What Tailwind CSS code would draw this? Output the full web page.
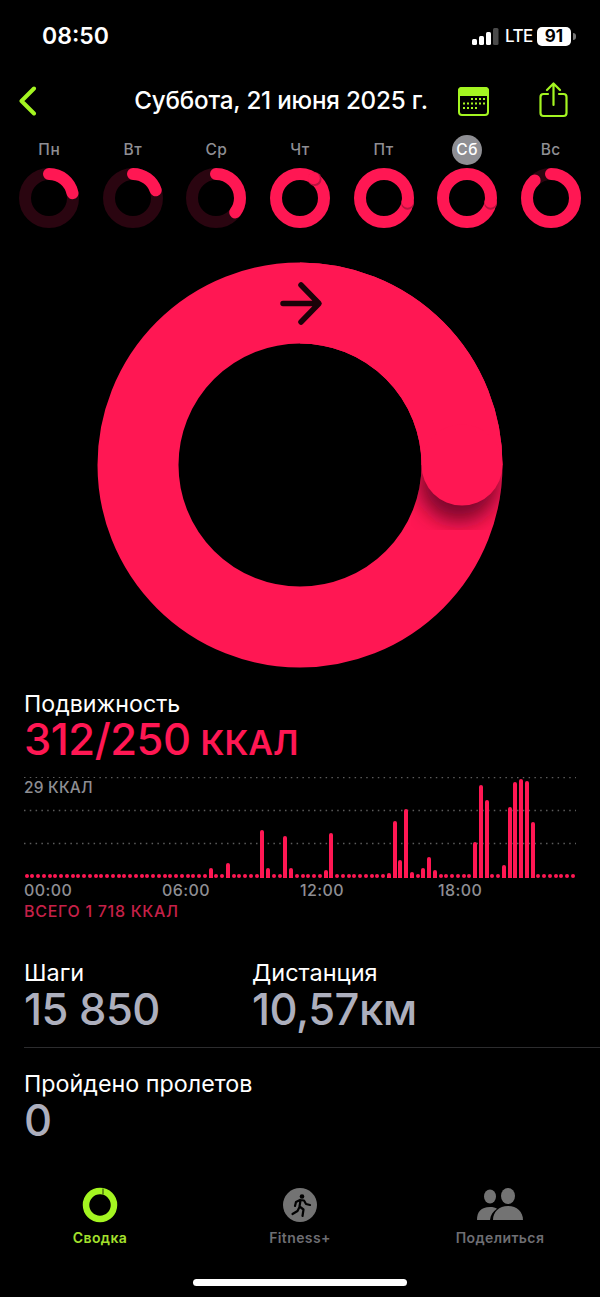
<!DOCTYPE html>
<html lang="ru">
<head>
<meta charset="utf-8">
<script src="https://cdn.jsdelivr.net/npm/@tailwindcss/browser@4"></script>
</head>
<body class="bg-black">
<div class="w-[600px] h-[1297px] overflow-hidden bg-black text-white font-['Inter','Noto_Sans',sans-serif] flex flex-col">

  <!-- status bar -->
  <div class="h-[72px] shrink-0 pl-[42px] pr-[24px] flex items-center justify-between">
    <span class="text-[23px] font-semibold leading-none">08:50</span>
    <div class="flex items-center gap-[6px]">
      <svg width="27" height="17" viewBox="0 0 27 17">
        <rect x="0" y="11" width="5" height="6" rx="1.5" fill="#fff"/>
        <rect x="7" y="8" width="5" height="9" rx="1.5" fill="#fff"/>
        <rect x="14" y="4" width="5" height="13" rx="1.5" fill="#fff"/>
        <rect x="21" y="0" width="5.5" height="17" rx="1.5" fill="#4a4a4a"/>
      </svg>
      <span class="text-[17px] font-medium leading-none w-[25px] tracking-[-0.5px]">LTE</span>
      <div class="flex items-center gap-[2px] ml-[1px]">
        <div class="w-[34px] h-[19px] rounded-[5px] bg-white text-black text-[17px] font-bold leading-none flex items-center justify-center">91</div>
        <div class="w-[3px] h-[7px] rounded-r-full bg-[#777]"></div>
      </div>
    </div>
  </div>

  <!-- nav -->
  <div class="h-[58px] shrink-0 relative flex items-center justify-center pr-[38px]">
    <svg class="absolute left-[18px] top-[14px]" width="19" height="30" viewBox="0 0 19 30" fill="none">
      <path d="M16 2.5 3.5 15 16 27.5" stroke="#a4f521" stroke-width="4" stroke-linecap="round" stroke-linejoin="round"/>
    </svg>
    <span class="text-[24.2px] font-medium leading-none tracking-[-0.2px]">Суббота, 21 июня 2025 г.</span>
    <svg class="absolute left-[458px] top-[15px]" width="31" height="29" viewBox="0 0 31 29" fill="none">
      <rect x="1" y="1" width="29" height="27" rx="3" stroke="#a4f521" stroke-width="2"/>
      <path d="M1 8V4a3 3 0 0 1 3-3h23a3 3 0 0 1 3 3v4Z" fill="#a4f521" stroke="#a4f521" stroke-width="2"/>
      <g fill="#a4f521">
        <rect x="13" y="11" width="2" height="2"/><rect x="17" y="11" width="2" height="2"/><rect x="21" y="11" width="2" height="2"/><rect x="25" y="11" width="2" height="2"/>
        <rect x="5" y="15.5" width="2" height="2"/><rect x="9" y="15.5" width="2" height="2"/><rect x="13" y="15.5" width="2" height="2"/><rect x="17" y="15.5" width="2" height="2"/><rect x="21" y="15.5" width="2" height="2"/><rect x="25" y="15.5" width="2" height="2"/>
        <rect x="5" y="20" width="2" height="2"/><rect x="9" y="20" width="2" height="2"/><rect x="13" y="20" width="2" height="2"/><rect x="17" y="20" width="2" height="2"/>
      </g>
    </svg>
    <svg class="absolute left-[539px] top-[10px]" width="29" height="36" viewBox="0 0 29 36" fill="none" stroke="#a4f521" stroke-width="2.2" stroke-linecap="round" stroke-linejoin="round">
      <path d="M9 12H4.5a3 3 0 0 0-3 3v16a3 3 0 0 0 3 3h20a3 3 0 0 0 3-3V15a3 3 0 0 0-3-3H20"/>
      <path d="M14.5 23V2M8 8l6.5-6.500L21 8"/>
    </svg>
  </div>

  <!-- week -->
  <div class="shrink-0 grid grid-cols-7 px-[7.5px] text-[15.5px] text-[#8e8e93] font-medium">
    <div class="flex flex-col items-center">
      <div class="h-[38px] pt-[2px] flex items-center"><span class="h-[28px] flex items-center tracking-[0.5px]">Пн</span></div>
      <svg width="60" height="60" viewBox="0 0 60 60" fill="none" stroke-width="12"><circle cx="30" cy="30" r="24" stroke="#2a0510"/><circle cx="30" cy="30" r="24" stroke="#ff1753" stroke-linecap="round" pathLength="360" stroke-dasharray="78 360" transform="rotate(-90 30 30)"/></svg>
    </div>
    <div class="flex flex-col items-center">
      <div class="h-[38px] pt-[2px] flex items-center"><span class="h-[28px] flex items-center tracking-[0.5px]">Вт</span></div>
      <svg width="60" height="60" viewBox="0 0 60 60" fill="none" stroke-width="12"><circle cx="30" cy="30" r="24" stroke="#2a0510"/><circle cx="30" cy="30" r="24" stroke="#ff1753" stroke-linecap="round" pathLength="360" stroke-dasharray="71 360" transform="rotate(-90 30 30)"/></svg>
    </div>
    <div class="flex flex-col items-center">
      <div class="h-[38px] pt-[2px] flex items-center"><span class="h-[28px] flex items-center tracking-[0.5px]">Ср</span></div>
      <svg width="60" height="60" viewBox="0 0 60 60" fill="none" stroke-width="12"><circle cx="30" cy="30" r="24" stroke="#2a0510"/><circle cx="30" cy="30" r="24" stroke="#ff1753" stroke-linecap="round" pathLength="360" stroke-dasharray="127 360" transform="rotate(-90 30 30)"/></svg>
    </div>
    <div class="flex flex-col items-center">
      <div class="h-[38px] pt-[2px] flex items-center"><span class="h-[28px] flex items-center tracking-[0.5px]">Чт</span></div>
      <svg width="60" height="60" viewBox="0 0 60 60" fill="none" stroke-width="12"><circle cx="30" cy="30" r="24" stroke="#ff1753"/><circle cx="44.800" cy="11.100" r="6.800" fill="#b8143f"/><circle cx="43.800" cy="10.300" r="6" fill="#ff1753"/></svg>
    </div>
    <div class="flex flex-col items-center">
      <div class="h-[38px] pt-[2px] flex items-center"><span class="h-[28px] flex items-center tracking-[0.5px]">Пт</span></div>
      <svg width="60" height="60" viewBox="0 0 60 60" fill="none" stroke-width="12"><circle cx="30" cy="30" r="24" stroke="#ff1753"/><circle cx="53.600" cy="35.300" r="6.400" fill="#b8143f"/><circle cx="53.600" cy="33.800" r="6" fill="#ff1753"/></svg>
    </div>
    <div class="flex flex-col items-center">
      <div class="h-[38px] pt-[2px] flex items-center"><span class="w-[30px] h-[30px] rounded-full bg-[#8e8e93] text-white flex items-center justify-center tracking-[0.5px]">Сб</span></div>
      <svg width="60" height="60" viewBox="0 0 60 60" fill="none" stroke-width="12"><circle cx="30" cy="30" r="24" stroke="#ff1753"/><circle cx="53.600" cy="35.300" r="6.400" fill="#b8143f"/><circle cx="53.600" cy="33.800" r="6" fill="#ff1753"/></svg>
    </div>
    <div class="flex flex-col items-center">
      <div class="h-[38px] pt-[2px] flex items-center"><span class="h-[28px] flex items-center tracking-[0.5px]">Вс</span></div>
      <svg width="60" height="60" viewBox="0 0 60 60" fill="none" stroke-width="12"><circle cx="30" cy="30" r="24" stroke="#2a0510"/><circle cx="30" cy="30" r="24" stroke="#ff1753" stroke-linecap="round" pathLength="360" stroke-dasharray="317 360" transform="rotate(-90 30 30)"/></svg>
    </div>
  </div>

  <!-- big ring -->
  <div class="shrink-0 mt-[33px] flex justify-center">
    <svg width="408" height="408" viewBox="0 0 408 408" fill="none">
      <defs>
        <mask id="ringMask"><circle cx="204" cy="204" r="162" fill="none" stroke="#fff" stroke-width="81"/></mask>
        <filter id="capBlur" x="-60%" y="-60%" width="220%" height="220%"><feGaussianBlur stdDeviation="10"/></filter>
      </defs>
      <circle cx="204" cy="204" r="162" stroke="#ff1753" stroke-width="81"/>
      <g mask="url(#ringMask)">
        <circle cx="363" cy="221" r="40" fill="#4a0619" fill-opacity="0.72" filter="url(#capBlur)"/>
      </g>
      <path d="M204 42a162 162 0 0 1 162 162" stroke="#ff1753" stroke-width="81"/>
      <circle cx="366" cy="204" r="40.500" fill="#ff1753"/>
      <path d="M187 42.500h35M205 24l18 18.500-18 18.500" stroke="#1a0208" stroke-width="5.500" stroke-linecap="round" stroke-linejoin="round"/>
    </svg>
  </div>

  <!-- move -->
  <div class="shrink-0 mt-[20px] px-[24px]">
    <div class="text-[23.2px] leading-[30px] text-white">Подвижность</div>
    <div class="text-[#ff1753] leading-[42px] -mt-[1px] flex items-baseline gap-[10px]">
      <span class="text-[43.5px] font-medium tracking-[-0.5px]">312/250</span>
      <span class="text-[34px] font-semibold">ККАЛ</span>
    </div>
  </div>

  <!-- chart -->
  <div class="shrink-0 mt-[13px] mx-[24px] relative h-[101px]">
    <svg class="absolute left-0 top-0" width="552" height="70" viewBox="0 0 552 70" fill="none" stroke="#5c5c5c" stroke-width="1.500" stroke-dasharray="1.500 4.300">
      <path d="M0 .5h552M0 33.500h552M0 66.500h552"/>
    </svg>
    <div class="absolute left-0 top-[1px] bg-black pr-[2px] text-[15.5px] leading-[20px] font-medium text-[#8e8e93] tracking-[0.2px]">29 ККАЛ</div>
    <div class="absolute left-0 right-0 bottom-0 h-[100px] pl-[0.500px] pr-[1px] flex items-end justify-between">
      <div class="w-1 rounded-full bg-[#ff1753] h-1"></div><div class="w-1 rounded-full bg-[#ff1753] h-1"></div><div class="w-1 rounded-full bg-[#ff1753] h-1"></div><div class="w-1 rounded-full bg-[#ff1753] h-1"></div><div class="w-1 rounded-full bg-[#ff1753] h-1"></div><div class="w-1 rounded-full bg-[#ff1753] h-1"></div><div class="w-1 rounded-full bg-[#ff1753] h-1"></div><div class="w-1 rounded-full bg-[#ff1753] h-1"></div>
      <div class="w-1 rounded-full bg-[#ff1753] h-1"></div><div class="w-1 rounded-full bg-[#ff1753] h-1"></div><div class="w-1 rounded-full bg-[#ff1753] h-1"></div><div class="w-1 rounded-full bg-[#ff1753] h-1"></div><div class="w-1 rounded-full bg-[#ff1753] h-1"></div><div class="w-1 rounded-full bg-[#ff1753] h-1"></div><div class="w-1 rounded-full bg-[#ff1753] h-1"></div><div class="w-1 rounded-full bg-[#ff1753] h-1"></div>
      <div class="w-1 rounded-full bg-[#ff1753] h-1"></div><div class="w-1 rounded-full bg-[#ff1753] h-1"></div><div class="w-1 rounded-full bg-[#ff1753] h-1"></div><div class="w-1 rounded-full bg-[#ff1753] h-1"></div><div class="w-1 rounded-full bg-[#ff1753] h-1"></div><div class="w-1 rounded-full bg-[#ff1753] h-1"></div><div class="w-1 rounded-full bg-[#ff1753] h-1"></div><div class="w-1 rounded-full bg-[#ff1753] h-1"></div>
      <div class="w-1 rounded-full bg-[#ff1753] h-1"></div><div class="w-1 rounded-full bg-[#ff1753] h-1"></div><div class="w-1 rounded-full bg-[#ff1753] h-1"></div><div class="w-1 rounded-full bg-[#ff1753] h-1"></div><div class="w-1 rounded-full bg-[#ff1753] h-1"></div><div class="w-1 rounded-full bg-[#ff1753] h-1"></div><div class="w-1 rounded-full bg-[#ff1753] h-1"></div><div class="w-1 rounded-full bg-[#ff1753] h-1"></div>
      <div class="w-1 rounded-t-[2px] bg-[#ff1753] h-[10px]"></div><div class="w-1 rounded-full bg-[#ff1753] h-1"></div><div class="w-1 rounded-full bg-[#ff1753] h-1"></div><div class="w-1 rounded-t-[2px] bg-[#ff1753] h-[15px]"></div><div class="w-1 rounded-full bg-[#ff1753] h-1"></div><div class="w-1 rounded-full bg-[#ff1753] h-1"></div><div class="w-1 rounded-full bg-[#ff1753] h-1"></div><div class="w-1 rounded-full bg-[#ff1753] h-1"></div>
      <div class="w-1 rounded-full bg-[#ff1753] h-1"></div><div class="w-1 rounded-t-[2px] bg-[#ff1753] h-[48px]"></div><div class="w-1 rounded-t-[2px] bg-[#ff1753] h-[10px]"></div><div class="w-1 rounded-full bg-[#ff1753] h-1"></div><div class="w-1 rounded-full bg-[#ff1753] h-1"></div><div class="w-1 rounded-t-[2px] bg-[#ff1753] h-[42px]"></div><div class="w-1 rounded-t-[2px] bg-[#ff1753] h-[10px]"></div><div class="w-1 rounded-full bg-[#ff1753] h-1"></div>
      <div class="w-1 rounded-full bg-[#ff1753] h-1"></div><div class="w-1 rounded-full bg-[#ff1753] h-1"></div><div class="w-1 rounded-full bg-[#ff1753] h-1"></div><div class="w-1 rounded-full bg-[#ff1753] h-1"></div><div class="w-1 rounded-t-[2px] bg-[#ff1753] h-[8px]"></div><div class="w-1 rounded-t-[2px] bg-[#ff1753] h-[45px]"></div><div class="w-1 rounded-full bg-[#ff1753] h-1"></div><div class="w-1 rounded-full bg-[#ff1753] h-1"></div>
      <div class="w-1 rounded-full bg-[#ff1753] h-1"></div><div class="w-1 rounded-full bg-[#ff1753] h-1"></div><div class="w-1 rounded-full bg-[#ff1753] h-1"></div><div class="w-1 rounded-full bg-[#ff1753] h-1"></div><div class="w-1 rounded-full bg-[#ff1753] h-1"></div><div class="w-1 rounded-full bg-[#ff1753] h-1"></div><div class="w-1 rounded-full bg-[#ff1753] h-1"></div><div class="w-1 rounded-t-[2px] bg-[#ff1753] h-[5px]"></div>
      <div class="w-1 rounded-t-[2px] bg-[#ff1753] h-[57px]"></div><div class="w-1 rounded-t-[2px] bg-[#ff1753] h-[18px]"></div><div class="w-1 rounded-t-[2px] bg-[#ff1753] h-[69px]"></div><div class="w-1 rounded-t-[2px] bg-[#ff1753] h-[6px]"></div><div class="w-1 rounded-full bg-[#ff1753] h-1"></div><div class="w-1 rounded-t-[2px] bg-[#ff1753] h-[10px]"></div><div class="w-1 rounded-t-[2px] bg-[#ff1753] h-[21px]"></div><div class="w-1 rounded-t-[2px] bg-[#ff1753] h-[8px]"></div>
      <div class="w-1 rounded-full bg-[#ff1753] h-1"></div><div class="w-1 rounded-full bg-[#ff1753] h-1"></div><div class="w-1 rounded-full bg-[#ff1753] h-1"></div><div class="w-1 rounded-full bg-[#ff1753] h-1"></div><div class="w-1 rounded-full bg-[#ff1753] h-1"></div><div class="w-1 rounded-full bg-[#ff1753] h-1"></div><div class="w-1 rounded-t-[2px] bg-[#ff1753] h-[36px]"></div><div class="w-1 rounded-t-[2px] bg-[#ff1753] h-[93px]"></div>
      <div class="w-1 rounded-t-[2px] bg-[#ff1753] h-[78px]"></div><div class="w-1 rounded-full bg-[#ff1753] h-1"></div><div class="w-1 rounded-full bg-[#ff1753] h-1"></div><div class="w-1 rounded-t-[2px] bg-[#ff1753] h-[13px]"></div><div class="w-1 rounded-t-[2px] bg-[#ff1753] h-[71px]"></div><div class="w-1 rounded-t-[2px] bg-[#ff1753] h-[96px]"></div><div class="w-1 rounded-t-[2px] bg-[#ff1753] h-[99px]"></div><div class="w-1 rounded-t-[2px] bg-[#ff1753] h-[97px]"></div>
      <div class="w-1 rounded-t-[2px] bg-[#ff1753] h-[56px]"></div><div class="w-1 rounded-full bg-[#ff1753] h-1"></div><div class="w-1 rounded-full bg-[#ff1753] h-1"></div><div class="w-1 rounded-full bg-[#ff1753] h-1"></div><div class="w-1 rounded-full bg-[#ff1753] h-1"></div><div class="w-1 rounded-full bg-[#ff1753] h-1"></div><div class="w-1 rounded-full bg-[#ff1753] h-1"></div><div class="w-1 rounded-full bg-[#ff1753] h-1"></div>
    </div>
  </div>
  <div class="shrink-0 mx-[24px] mt-[2px] grid grid-cols-4 w-[552px] text-[16px] leading-[20px] font-medium text-[#8e8e93] tracking-[0.4px]">
    <span>00:00</span><span>06:00</span><span>12:00</span><span>18:00</span>
  </div>
  <div class="shrink-0 mx-[24px] mt-[1px] text-[16px] leading-[20px] font-medium text-[#c62048] tracking-[0.7px]">ВСЕГО 1 718 ККАЛ</div>

  <!-- stats -->
  <div class="shrink-0 mt-[38px] pl-[24px] flex h-[88px]">
    <div class="w-[228px]">
      <div class="text-[23.5px] leading-[28px]">Шаги</div>
      <div class="text-[43.5px] leading-[42px] mt-[1px] font-medium text-[#adafbd] tracking-[-0.5px]">15 850</div>
    </div>
    <div>
      <div class="text-[23.5px] leading-[28px]">Дистанция</div>
      <div class="leading-[42px] mt-[1px] font-medium text-[#adafbd] tracking-[-0.5px]"><span class="text-[43.5px]">10,57</span><span class="text-[44px]">км</span></div>
    </div>
  </div>
  <div class="shrink-0 ml-[24px] h-px bg-[#2c2c2e]"></div>
  <div class="shrink-0 pl-[24px] mt-[22px]">
    <div class="text-[23.3px] leading-[28px]">Пройдено пролетов</div>
    <div class="text-[43.5px] leading-[42px] mt-[1px] font-medium text-[#adafbd]">0</div>
  </div>

  <!-- tab bar -->
  <div class="flex-1"></div>
  <div class="shrink-0 grid grid-cols-3 text-[14px] font-semibold leading-[18px] tracking-[0.4px] text-[#6e6e73]">
    <div class="flex flex-col items-center gap-[6px]">
      <svg width="36" height="36" viewBox="0 0 36 36" fill="none"><circle cx="18" cy="18" r="14" stroke="#a4f521" stroke-width="6.500"/><path d="M21 1.500v6" stroke="#000" stroke-width="0.800"/></svg>
      <span class="text-[#a4e02c]">Сводка</span>
    </div>
    <div class="flex flex-col items-center gap-[6px]">
      <svg width="36" height="36" viewBox="0 0 36 36"><circle cx="18" cy="18" r="17" fill="#737373"/><circle cx="20" cy="9.500" r="2.300" fill="#000"/><path d="M18 13l4 .5 2 3.500 4 1M18 13l-4 2-1 4M18.500 13.500l-1 6 4 3-1 6.500M17.500 20l-2 4-5 3" stroke="#000" stroke-width="2.200" fill="none" stroke-linecap="round" stroke-linejoin="round"/></svg>
      <span>Fitness+</span>
    </div>
    <div class="flex flex-col items-center gap-[6px]">
      <svg width="46" height="36" viewBox="0 0 46 36" fill="#737373">
        <ellipse cx="13" cy="9.500" rx="6" ry="7"/>
        <path d="M0 33c0-8 4-13 13-13 3 0 5.500.6 7 1.800-4 2.500-6.500 6.500-7 11.200Z"/>
        <ellipse cx="31" cy="9" rx="7" ry="8"/>
        <path d="M16 33c0-8 6-14 15-14s15 6 15 14Z"/>
      </svg>
      <span>Поделиться</span>
    </div>
  </div>
  <div class="shrink-0 h-[50px] flex justify-center items-end pb-[11px]">
    <div class="w-[214px] h-[7px] rounded-full bg-white"></div>
  </div>
</div>
</body>
</html>
